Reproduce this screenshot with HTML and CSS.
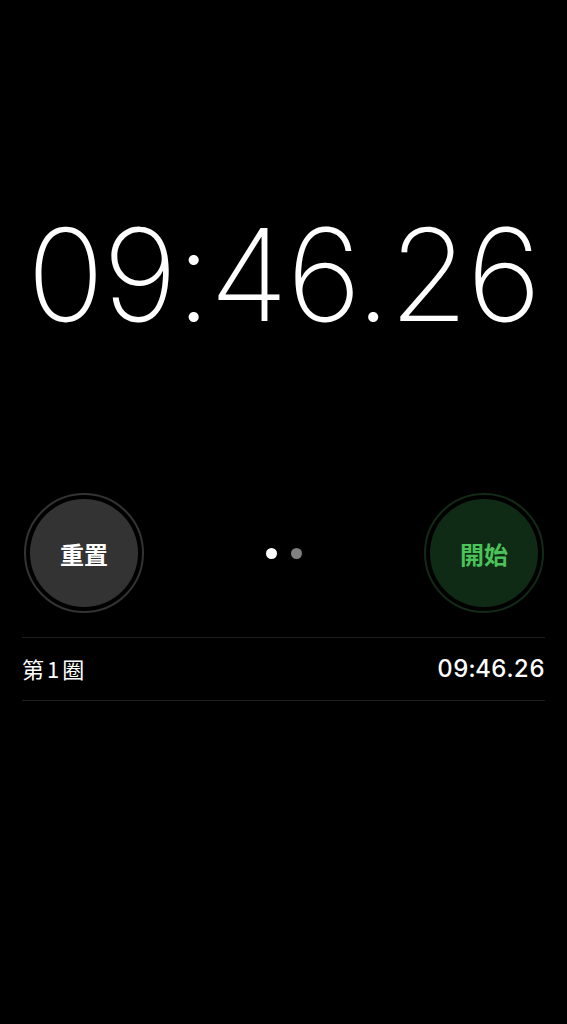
FILE: index.html
```html
<!DOCTYPE html>
<html lang="zh-Hant">
<head>
<meta charset="utf-8">
<link rel="stylesheet" href="styles.css">
</head>
<body>
<div class="screen">
  <div class="timer">09:46.26</div>
  <div class="controls">
    <div class="btn btn-reset"><div class="btn-inner">重置</div></div>
    <div class="dots"><span class="dot on"></span><span class="dot"></span></div>
    <div class="btn btn-start"><div class="btn-inner">開始</div></div>
  </div>
  <div class="laps">
    <div class="lap"><span class="lap-name">第1圈</span><span class="lap-time">09:46.26</span></div>
  </div>
</div>
</body>
</html>
```
FILE: styles.css
```css
html, body {
  margin: 0;
  padding: 0;
  background: #000;
}
.screen {
  width: 567px;
  height: 1024px;
  background: #000;
  color: #fff;
  font-family: Inter, "Noto Sans CJK TC", sans-serif;
  display: flex;
  flex-direction: column;
}
.timer {
  margin-top: 200px;
  height: 150px;
  font-family: Inter, sans-serif;
  font-weight: 250;
  font-size: 128px;
  line-height: 150px;
  text-align: center;
  letter-spacing: -1.5px;
}
.controls {
  margin-top: 143px;
  padding: 0 23px 0 24px;
  height: 120px;
  display: flex;
  align-items: center;
  justify-content: space-between;
}
.btn {
  width: 120px;
  height: 120px;
  border-radius: 50%;
  box-sizing: border-box;
  padding: 4px;
  border: 2px solid #333;
  display: flex;
}
.btn-inner {
  flex: 1;
  border-radius: 50%;
  display: flex;
  align-items: center;
  justify-content: center;
  font-family: "Noto Sans CJK TC", sans-serif;
  font-size: 24px;
  font-weight: 700;
}
.btn-reset .btn-inner {
  background: #333333;
  color: #fff;
}
.btn-start {
  border-color: #132a17;
}
.btn-start .btn-inner {
  background: #0f2a15;
  color: #4cc25a;
}
.dots {
  display: flex;
  gap: 14px;
  align-items: center;
}
.dot {
  width: 11px;
  height: 11px;
  border-radius: 50%;
  background: #808080;
}
.dot.on {
  background: #fff;
}
.laps {
  margin: 24px 22px 0 22px;
  border-top: 1px solid #1f1f1f;
}
.lap {
  height: 63px;
  padding-bottom: 2px;
  box-sizing: border-box;
  border-bottom: 1px solid #1f1f1f;
  display: flex;
  align-items: center;
  justify-content: space-between;
}
.lap-name {
  font-family: "Noto Sans CJK TC", sans-serif;
  font-weight: 400;
  font-size: 22px;
  letter-spacing: 3px;
}
.lap-time {
  font-family: Inter, sans-serif;
  font-weight: 500;
  font-size: 24px;
  font-variant-numeric: tabular-nums;
  letter-spacing: 0.2px;
}
```
